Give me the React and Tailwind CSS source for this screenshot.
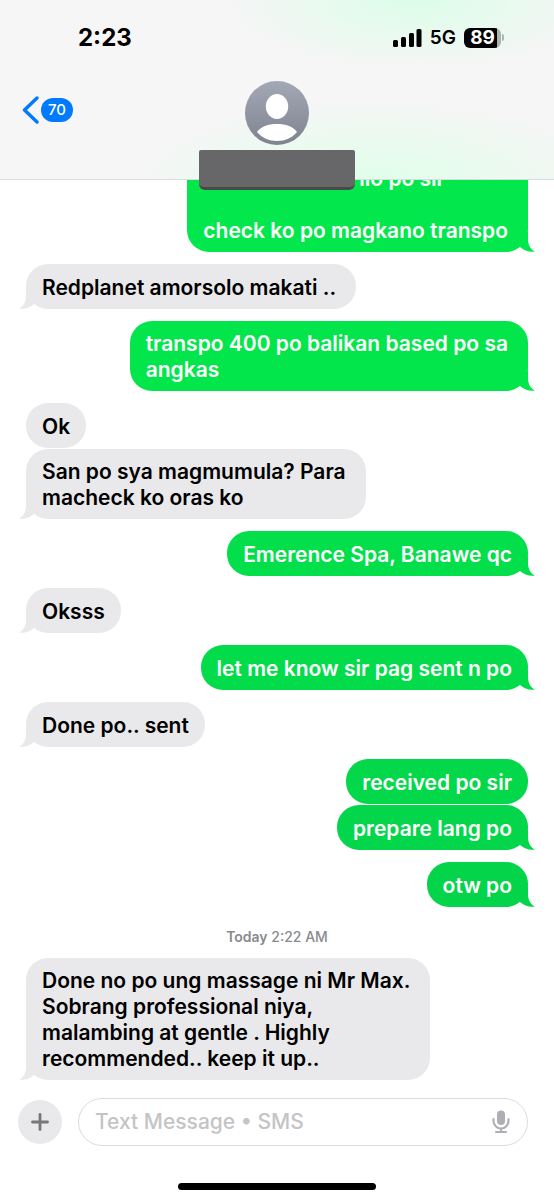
import React from "react";

const messages = [
  { from: "me", lead: "llo po sir", text: "\ncheck ko po magkano transpo", tail: true, color: "bg-[#02e84c]", fill: "fill-[#02e84c]", roomy: true },
  { from: "them", text: "Redplanet amorsolo makati ..", tail: true, roomy: true },
  { from: "me", text: "transpo 400 po balikan based po sa\nangkas", tail: true, color: "bg-[#02e64c]", fill: "fill-[#02e64c]", roomy: true },
  { from: "them", text: "Ok", joined: true },
  { from: "them", text: "San po sya magmumula? Para\nmacheck ko oras ko", tail: true, roomy: true },
  { from: "me", text: "Emerence Spa, Banawe qc", tail: true, color: "bg-[#02df4b]", fill: "fill-[#02df4b]" },
  { from: "them", text: "Oksss", tail: true },
  { from: "me", text: "let me know sir pag sent n po", tail: true, color: "bg-[#02dc4b]", fill: "fill-[#02dc4b]" },
  { from: "them", text: "Done po.. sent", tail: true },
  { from: "me", text: "received po sir", joined: true, color: "bg-[#03d84a]", fill: "fill-[#03d84a]" },
  { from: "me", text: "prepare lang po", tail: true, color: "bg-[#03d64a]", fill: "fill-[#03d64a]" },
  { from: "me", text: "otw po", tail: true, color: "bg-[#03d44a]", fill: "fill-[#03d44a]" },
];

function Bubble({ message }) {
  const mine = message.from === "me";
  const side = mine ? "self-end text-white " + message.color : "self-start bg-[#e9e9eb] text-black";
  return (
    <li
      className={`relative flex min-h-[45px] items-center whitespace-pre-line rounded-[22px] pt-[10px] pb-2 pl-4 text-[21px] leading-[26px] font-semibold ${
        message.roomy ? "pr-5" : "pr-4"
      } ${message.joined ? "mb-px" : "mb-3"} ${side}`}
    >
      <div>
        {message.lead && <p className="pl-[156px]">{message.lead}</p>}
        {message.text}
      </div>
      {message.tail && (
        <svg
          viewBox="0 0 16 20"
          aria-hidden="true"
          className={`absolute bottom-0 h-5 w-4 ${
            mine ? "-right-[7px] " + message.fill : "-left-[7px] -scale-x-100 fill-[#e9e9eb]"
          }`}
        >
          <path d="M9 0V7C9 13 11.500 17.500 16 19.600C11 20.600 5 18.800 1 15L0 8V0Z" />
        </svg>
      )}
    </li>
  );
}

function StatusBar() {
  return (
    <div className="flex h-[75px] items-center justify-between pr-[50px] pl-[78px]">
      <span className="text-[24px] leading-[28px] font-bold">2:23</span>
      <div className="flex items-center gap-2">
        <svg viewBox="0 0 29 18" className="h-[18px] w-[29px]" aria-label="Signal strength">
          <rect x="0" y="11" width="5" height="7" rx="1.500" />
          <rect x="8" y="8" width="5" height="10" rx="1.500" />
          <rect x="16" y="4" width="5" height="14" rx="1.500" />
          <rect x="23.500" y="0" width="5" height="18" rx="1.500" />
        </svg>
        <span className="text-[19px] leading-[24px] font-semibold">5G</span>
        <div className="flex items-center gap-px">
          <div className="flex h-5 w-[37px] items-center justify-center rounded-[6px] bg-[linear-gradient(to_right,#000_89%,#a9b5ae_89%)]">
            <span className="text-[19px] leading-5 font-bold text-white">89</span>
          </div>
          <div className="h-[7px] w-0.5 rounded-r-full bg-[#a9b5ae]" />
        </div>
      </div>
    </div>
  );
}

function Header() {
  return (
    <header className="relative z-10 border-b border-[#d9dcda] bg-[#f6f6f6] bg-[radial-gradient(ellipse_190px_70px_at_75%_0%,#dbfde8,transparent),radial-gradient(ellipse_240px_80px_at_68%_100%,#e0fee9,transparent)]">
      <StatusBar />
      <div className="grid grid-cols-[1fr_auto_1fr] items-start">
        <button aria-label="Back, 70 unread" className="mt-[21px] ml-[22px] flex items-center gap-0.5 justify-self-start">
          <svg viewBox="0 0 17 28" className="h-7 w-[17px]" aria-hidden="true">
            <path d="M15 2L2.500 14L15 26" fill="none" stroke="#007aff" strokeWidth="3.400" strokeLinecap="round" strokeLinejoin="round" />
          </svg>
          <span className="rounded-full bg-[#007aff] px-[7px] text-[15px] leading-6 font-medium text-white">70</span>
        </button>
        <div className="-mb-[11px] flex flex-col items-center pt-[6px]">
          <svg viewBox="0 0 64 64" className="size-16" aria-label="Contact photo">
            <defs>
              <linearGradient id="avatar" x1="0" y1="0" x2="0" y2="1">
                <stop offset="0" stopColor="#a3a8b6" />
                <stop offset="1" stopColor="#7f838f" />
              </linearGradient>
            </defs>
            <circle cx="32" cy="32" r="32" fill="url(#avatar)" />
            <ellipse cx="32" cy="25.500" rx="11.200" ry="12.500" fill="#fff" />
            <path d="M12 51C16 45.500 23 43 32 43S48 45.500 52 51C47 57 40 60 32 60S17 57 12 51Z" fill="#fff" />
          </svg>
          <div className="mt-[5px] h-10 w-[156px] rounded-[2px] rounded-b-[6px] border-b-[3px] border-[#49494b] bg-[#67676a]" />
        </div>
      </div>
    </header>
  );
}

function Composer() {
  return (
    <form className="flex items-center gap-4 pr-[26px] pl-[18px]" onSubmit={(e) => e.preventDefault()}>
      <button type="button" aria-label="Add attachment" className="grid size-11 place-items-center rounded-full bg-[#e9e9eb]">
        <svg viewBox="0 0 18 18" className="size-[18px]" aria-hidden="true">
          <path d="M9 1.500V16.500M1.500 9H16.500" fill="none" stroke="#77777b" strokeWidth="2.800" strokeLinecap="round" />
        </svg>
      </button>
      <div className="flex h-12 min-w-0 flex-1 items-center rounded-full border border-[#dcdcde] bg-white pr-[17px] pl-4">
        <input
          type="text"
          aria-label="Text Message"
          placeholder="Text Message • SMS"
          className="min-w-0 flex-1 bg-transparent text-[21px] leading-[26px] font-medium outline-none placeholder:text-[#c4c4c6]"
        />
        <button type="button" aria-label="Dictate">
          <svg viewBox="0 0 18 24" className="h-6 w-[18px]" fill="none" stroke="#aeaeb4" strokeLinecap="round" aria-hidden="true">
            <rect x="5" y="0.500" width="8" height="14.500" rx="4" fill="#aeaeb4" stroke="none" />
            <path d="M1.500 9V11A7.500 7.500 0 0 0 16.500 11V9M9 19V22M4 22H14" strokeWidth="2.100" />
          </svg>
        </button>
      </div>
    </form>
  );
}

export default function App() {
  return (
    <div className="flex h-screen flex-col bg-white font-['Inter',sans-serif] text-black">
      <Header />
      <main className="flex min-h-0 flex-1 flex-col justify-end overflow-hidden px-[26px]">
        <ul className="flex flex-col">
          {messages.map((m) => (
            <Bubble key={m.text} message={m} />
          ))}
        </ul>
        <p className="mt-[9px] mb-3 text-center text-[14px] leading-[18px] font-medium text-[#8a8a8e]">
          <span className="font-semibold">Today</span> 2:22 AM
        </p>
        <ul className="flex flex-col">
          <Bubble
            message={{
              from: "them",
              text: "Done no po ung massage ni Mr Max.\nSobrang professional niya,\nmalambing at gentle . Highly\nrecommended.. keep it up..",
              tail: true,
              roomy: true,
            }}
          />
        </ul>
      </main>
      <footer className="flex flex-col pt-[6px] pb-[10px]">
        <Composer />
        <div className="mt-[37px] h-[7px] w-[198px] self-center rounded-full bg-black" />
      </footer>
    </div>
  );
}
